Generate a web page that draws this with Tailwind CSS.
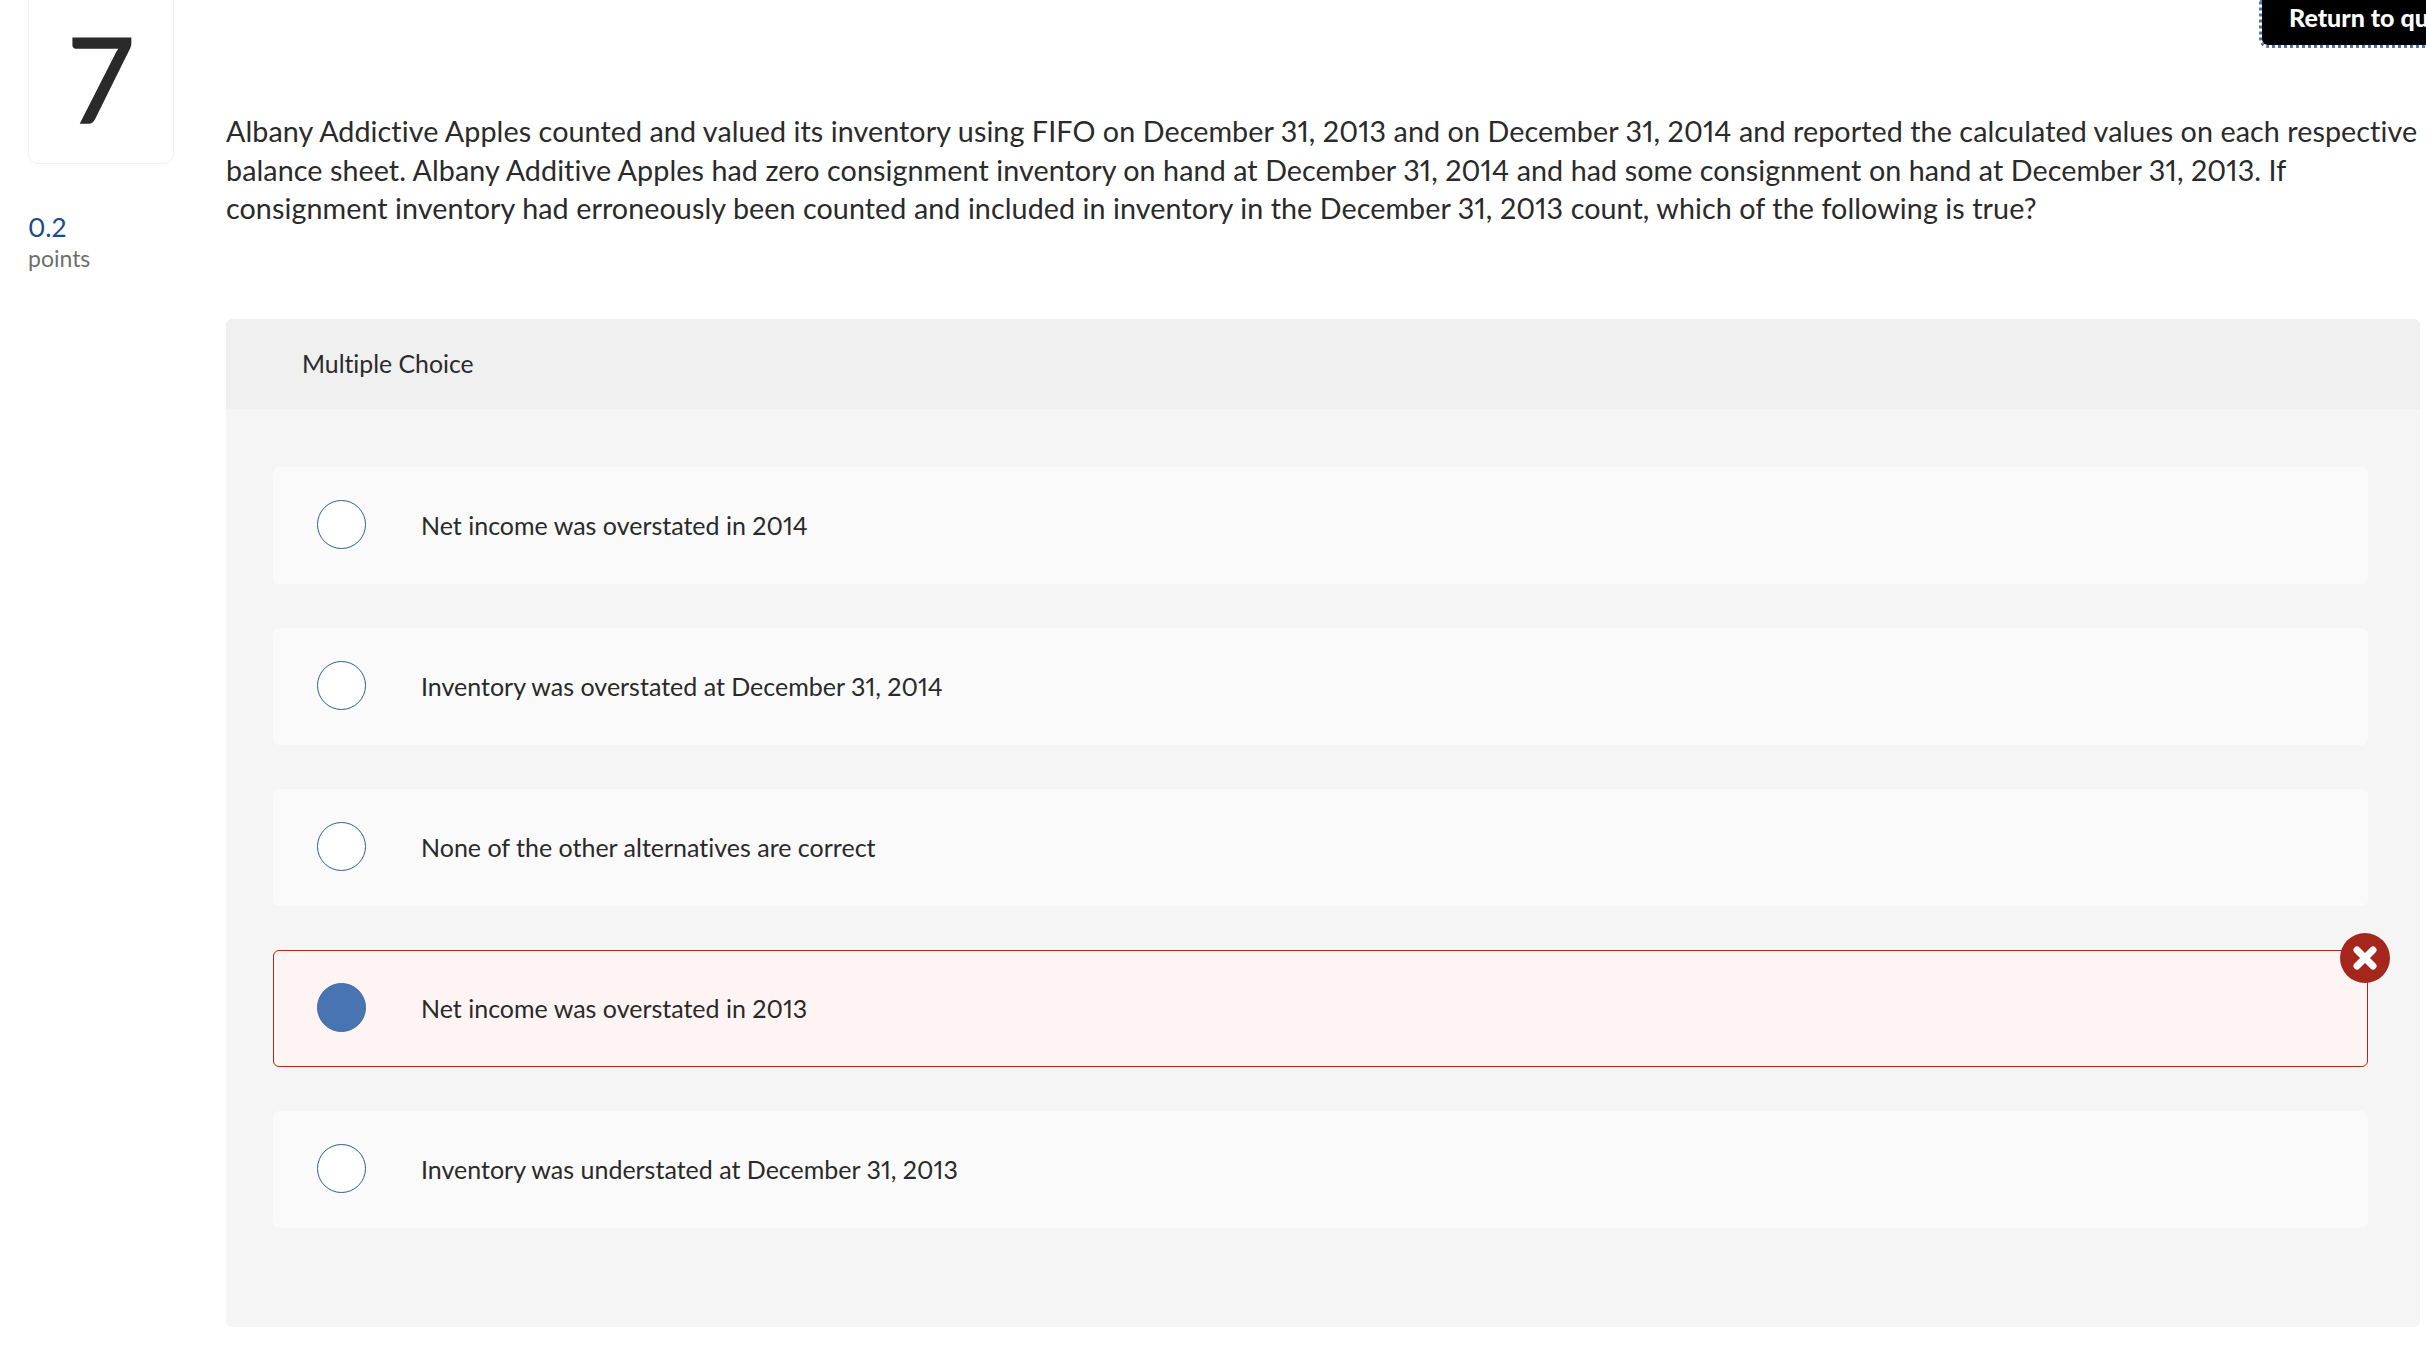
<!DOCTYPE html>
<html>
<head>
<meta charset="utf-8">
<script src="https://cdn.jsdelivr.net/npm/@tailwindcss/browser@4"></script>
</head>
<body class="bg-white">
<div class="flex w-[2426px] h-[1362px] overflow-hidden font-['Lato','Open_Sans',sans-serif] text-[#2a2a2a] proportional-nums [font-variant-ligatures:none]">
  <aside class="w-[226px] shrink-0 pl-[28px]">
    <div class="w-[146px] h-[165px] -mt-[1px] flex items-center justify-center bg-white border border-[#f0f0f0] rounded-b-[10px] text-[118px] leading-none font-normal pb-[7px] [-webkit-text-stroke:1.5px_#2a2a2a]">7</div>
    <div class="mt-[47px] text-[26.5px] leading-[32px] text-[#1f4a8c]">0.2</div>
    <div class="text-[23px] leading-[30px] text-[#6f6f6f]">points</div>
  </aside>
  <main class="w-[2194px] shrink-0">
    <div class="h-[46px] pl-[2036px]">
      <div class="w-[300px] h-[45px] bg-black rounded-bl-[6px] outline-[3px] outline-dotted outline-[#4a76b2] pl-[27px] text-white font-black text-[25px] leading-[34px] whitespace-nowrap">Return to question</div>
    </div>
    <p class="mt-[66px] text-[28.7px] leading-[38.5px] tracking-[0.08px] whitespace-nowrap">Albany Addictive Apples counted and valued its inventory using FIFO on December 31, 2013 and on December 31, 2014 and reported the calculated values on each respective<br>balance sheet. Albany Additive Apples had zero consignment inventory on hand at December 31, 2014 and had some consignment on hand at December 31, 2013. If<br>consignment inventory had erroneously been counted and included in inventory in the December 31, 2013 count, which of the following is true?</p>
    <section class="mt-[91px] h-[1008px] bg-[#f5f5f5] rounded-[6px] overflow-visible">
      <div class="h-[90px] bg-[#f0f0f0] rounded-t-[6px] pl-[76px] flex items-center text-[24.8px]">Multiple Choice</div>
      <div class="pt-[58px] pl-[47px] w-[2142px] flex flex-col gap-[43.5px]">
        <div class="h-[117.5px] bg-[#fafafa] rounded-[6px] flex items-center pl-[44px] gap-[55px] text-[25px]"><span class="w-[49px] h-[49px] -mt-[2px] rounded-full bg-white border border-[#2f5c99] shrink-0"></span>Net income was overstated in 2014</div>
        <div class="h-[117.5px] bg-[#fafafa] rounded-[6px] flex items-center pl-[44px] gap-[55px] text-[25px]"><span class="w-[49px] h-[49px] -mt-[2px] rounded-full bg-white border border-[#2f5c99] shrink-0"></span>Inventory was overstated at December 31, 2014</div>
        <div class="h-[117.5px] bg-[#fafafa] rounded-[6px] flex items-center pl-[44px] gap-[55px] text-[25px]"><span class="w-[49px] h-[49px] -mt-[2px] rounded-full bg-white border border-[#2f5c99] shrink-0"></span>None of the other alternatives are correct</div>
        <div class="relative h-[117.5px] bg-[#fef4f3] border-[1.5px] border-[#b1261c] rounded-[6px] flex items-center pl-[43px] gap-[55px] text-[25px]"><span class="w-[49px] h-[49px] -mt-[1px] rounded-full bg-[#4874b2] border border-[#3f6ba6] shrink-0"></span>Net income was overstated in 2013
          <span class="absolute -right-[23px] -top-[18px] w-[50px] h-[50px] rounded-full bg-[#a4261c] flex items-center justify-center">
            <svg viewBox="0 0 24 24" class="w-[24px] h-[24px]"><path d="M4 4 L20 20 M20 4 L4 20" stroke="#fff" stroke-width="7" stroke-linecap="round" fill="none"/></svg>
          </span>
        </div>
        <div class="h-[117.5px] bg-[#fafafa] rounded-[6px] flex items-center pl-[44px] gap-[55px] text-[25px]"><span class="w-[49px] h-[49px] -mt-[1px] rounded-full bg-white border border-[#2f5c99] shrink-0"></span>Inventory was understated at December 31, 2013</div>
      </div>
    </section>
  </main>
</div>
</body>
</html>
